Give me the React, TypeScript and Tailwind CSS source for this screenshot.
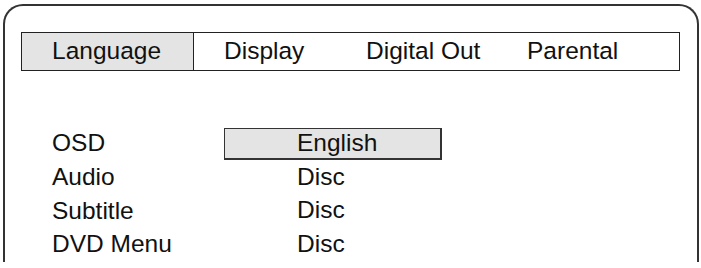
import React from "react";

const tabs = [
    { label: "Language", w: "w-[172px]", active: true },
    { label: "Display", w: "w-[142px]", active: false },
    { label: "Digital Out", w: "w-[161px]", active: false },
    { label: "Parental", w: "flex-1", active: false },
];

const rows = [
    { label: "OSD", value: "English", selected: true },
    { label: "Audio", value: "Disc", selected: false },
    { label: "Subtitle", value: "Disc", selected: false },
    { label: "DVD Menu", value: "Disc", selected: false },
];

export default function App() {
    return (
        <div className="w-[701px] h-[268px] bg-white overflow-hidden pt-[4px] pl-[3px] pr-[2px] text-[#111] text-[24.5px]" style={{ fontFamily: '"Liberation Sans", Arial, sans-serif' }}>
            <div className="h-[258px] border-t-2 border-l-2 border-r-2 border-[#333] rounded-t-[20px] pt-[26px] pl-[16px] pr-[17px]">
                {/* Tab bar */}
                <div className="flex h-[39px] border-[1.5px] border-[#222]">
                    {tabs.map(t => (
                        <div
                            key={t.label}
                            className={`${t.w} flex items-center pl-[30px] whitespace-nowrap ${t.active ? "bg-[#e4e4e4] border-r-[1.5px] border-[#222]" : ""}`}
                        >
                            {t.label}
                        </div>
                    ))}
                </div>

                {/* Settings rows */}
                <div className="mt-[56px] pl-[31px]">
                    {rows.map(r => (
                        <div key={r.label} className="flex h-[33.67px] items-center">
                            <div className="w-[172px] whitespace-nowrap">{r.label}</div>
                            <div
                                className={`w-[218px] h-[32px] flex items-center pl-[72px] border border-r-2 border-b-2 ${r.selected ? "bg-[#e4e4e4] border-[#333]" : "border-transparent"}`}
                            >
                                {r.value}
                            </div>
                        </div>
                    ))}
                </div>
            </div>
        </div>
    );
}
